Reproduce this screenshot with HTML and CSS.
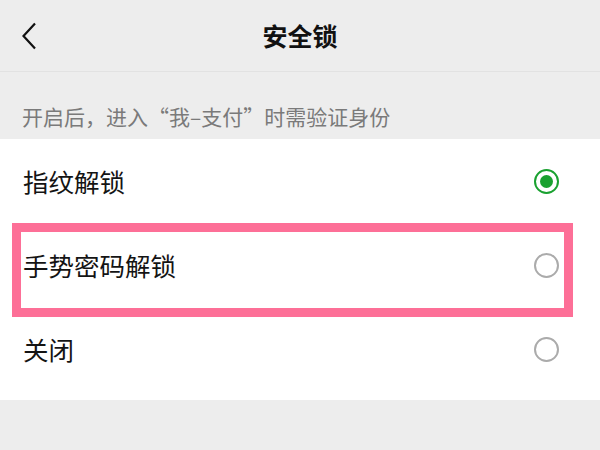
FILE: index.html
```html
<!DOCTYPE html>
<html lang="zh-CN">
<head>
<meta charset="utf-8">
<link rel="stylesheet" href="styles.css">
</head>
<body>
<div class="page">
  <header class="topbar">
    <svg class="back" width="16" height="28" viewBox="0 0 16 28"><polyline points="14,1.5 2.5,14 14,26.5" fill="none" stroke="#111" stroke-width="2.2" stroke-linejoin="miter"/></svg>
    <h1 class="title">安全锁</h1>
  </header>
  <div class="hint">开启后，进入“我–支付”时需验证身份</div>
  <div class="list">
    <div class="row"><span class="label">指纹解锁</span><span class="radio on"></span></div>
    <div class="row"><span class="label">手势密码解锁</span><span class="radio"></span></div>
    <div class="row"><span class="label">关闭</span><span class="radio"></span></div>
    <div class="highlight"></div>
  </div>
</div>
</body>
</html>
```
FILE: styles.css
```css
* { box-sizing: border-box; }
html, body { margin: 0; padding: 0; }
body {
  background: #ededed;
  font-family: "Noto Sans CJK SC", "Noto Sans", sans-serif;
  width: 600px;
  height: 450px;
  overflow: hidden;
}
.page { width: 600px; }
.topbar {
  height: 72px;
  border-bottom: 1px solid #e2e2e2;
  display: grid;
  grid-template-columns: 1fr auto 1fr;
  align-items: center;
  padding: 0 21px;
}
.back { grid-column: 1; justify-self: start; }
.title {
  grid-column: 2;
  margin: 0;
  font-size: 25px;
  font-weight: 700;
  color: #111;
  line-height: 1;
  margin-top: -1px;
}
.hint {
  height: 67px;
  display: flex;
  align-items: flex-end;
  padding: 0 22px 12px;
  font-size: 21px;
  line-height: 21px;
  color: #7a7a7a;
}
.list {
  position: relative;
  background: #fff;
  padding-bottom: 9px;
}
.row {
  height: 84px;
  display: flex;
  align-items: center;
  justify-content: space-between;
  padding: 0 41px 0 23px;
}
.label {
  font-size: 25.5px;
  color: #141414;
  line-height: 1;
}
.radio {
  width: 25px;
  height: 25px;
  border-radius: 50%;
  border: 2px solid #ababab;
  display: flex;
  align-items: center;
  justify-content: center;
}
.radio.on { border: 2.5px solid #1aa130; }
.radio.on::after {
  content: "";
  width: 13px;
  height: 13px;
  border-radius: 50%;
  background: #1aa130;
}
.highlight {
  position: absolute;
  left: 12px;
  top: 84px;
  width: 561px;
  height: 94px;
  border: 9px solid #fd6f97;
}
```
